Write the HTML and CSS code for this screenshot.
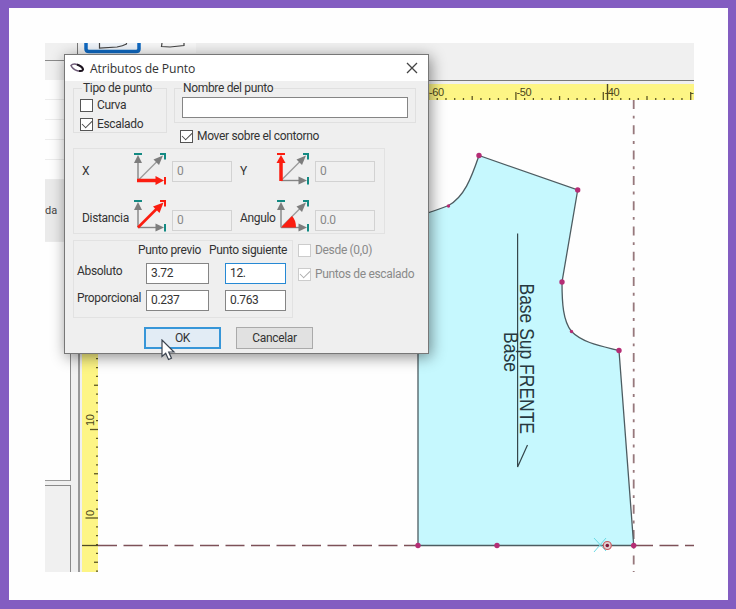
FILE: index.html
```html
<!DOCTYPE html>
<html lang="es">
<head>
<meta charset="utf-8">
<title>Atributos de Punto</title>
<link rel="stylesheet" href="styles.css">
</head>
<body>
<main class="frame">
  <section class="app">
    <div class="topbar">
      <div class="topbar-left"></div>
      <svg class="tools" width="200" height="37" viewBox="0 0 200 37">
        <path d="M62 0H118V10H62Z" fill="#f6f6f6"/>
        <path d="M8-3H61V6Q61 8.500 58 8.500H11Q8 8.500 8 6Z" fill="#eef3f9" stroke="#0f68c0" stroke-width="3.500"/>
        <path d="M21.500 0V5L39 4Q45 3 48.500 1V0M84 0L83.500 3.500L92 4L106 2.500V0" fill="none" stroke="#444" stroke-width="1.200"/>
      </svg>
    </div>
    <div class="workspace">
      <aside class="side">
        <div class="side-top">
          <div class="cell"></div><div class="cell"></div><div class="cell"></div><div class="cell"></div><div class="cell"></div>
          <div class="cell selected">da</div>
        </div>
        <div class="side-bottom"></div>
      </aside>
      <svg class="canvas" width="614" height="492" viewBox="80 80 614 492">
        <path d="M80 80H694V84H82V572H80Z" fill="#f0f0f0"/>
        <path d="M80 80H694" stroke="#777" stroke-width="2"/>
        <path d="M82 84H694V100H98V572H82Z" fill="#fdf585"/>
        <g id="ticks" stroke="#5c5624" stroke-width="1.300"></g>
        <g class="scale">
          <text x="429" y="95.500">-60</text><text x="516.500" y="95.500">-50</text><text x="604.500" y="95.500">-40</text><text x="690.300" y="95.500">-</text>
          <text transform="translate(94 426) rotate(-90)">10</text><text transform="translate(94 516) rotate(-90)">0</text>
        </g>
        <path d="M607.500 84V100" stroke="#4f4a25" stroke-width="1.400"/>
        <path d="M633.700 100V572" stroke="#97787c" stroke-width="1.800" stroke-dasharray="9 6.700 2.900 6.700"/>
        <path d="M98 545.500H418M634 545.500H694" stroke="#7d5158" stroke-width="1.300" stroke-dasharray="19 6.500"/>
        <path d="M82 545.500H98" stroke="#4f4a25" stroke-width="1.300"/>
        <path d="M418 545.500V216C431 212 440 209 448.500 205.500C464 197 471 179 479 155.500L577.700 190L562 282C562 303 563 321 571.500 331.500C583 343 601 346 619 350.500L633.700 545.500Z" fill="#c6f8fe" stroke="#4d5c61" stroke-width="1.300"/>
        <path d="M517.600 233.500V467L527.500 445" fill="none" stroke="#35474c" stroke-width="1.200"/>
        <g class="piece">
          <text transform="translate(519.500 283.500) rotate(90)" textLength="150.500" lengthAdjust="spacingAndGlyphs">Base Sup FRENTE</text>
          <text transform="translate(503.500 332) rotate(90)" textLength="40" lengthAdjust="spacingAndGlyphs">Base</text>
        </g>
        <path d="M594 538L606 551M594 552L606 538" stroke="#6bdbe5"/>
        <g fill="#b52d75">
          <circle cx="479" cy="155.500" r="2.700"/><circle cx="577.700" cy="190" r="2.700"/><circle cx="562" cy="282" r="2.700"/><circle cx="619" cy="350.500" r="2.700"/>
          <circle cx="418" cy="545.500" r="2.700"/><circle cx="497" cy="545.500" r="2.700"/><circle cx="633.700" cy="545.500" r="2.700"/>
          <circle cx="448.500" cy="206" r="1.700"/><circle cx="571.500" cy="331.500" r="1.700"/>
        </g>
        <circle cx="607.300" cy="545.500" r="4" fill="#e3cfd1" stroke="#c85a62" stroke-width="1.200"/><circle cx="607.300" cy="545.500" r="1.800" fill="#7d1838"/>
      </svg>
    </div>

    <section class="dialog">
      <header class="titlebar">
        <svg width="16" height="12" viewBox="0 0 16 12"><path d="M2 3.500C5 0 14 4 14 7.500C13 11 4 8.500 2 3.500Z" fill="#fff" stroke="#6f5c78" stroke-width="1.500"/><path d="M8 2.500Q13.500 4.500 14 7.500Q13.500 9.500 10 9" fill="none" stroke="#1d141f" stroke-width="2"/></svg>
        <h1>Atributos de Punto</h1>
        <svg class="close" width="12" height="12" viewBox="0 0 12 12"><path d="M1 1L11 11M11 1L1 11" stroke="#444" stroke-width="1.300"/></svg>
      </header>
      <div class="body">
        <div class="top-row">
          <fieldset class="kind">
            <legend>Tipo de punto</legend>
            <label class="check"><i class="box"></i><span>Curva</span></label>
            <label class="check"><i class="box on"></i><span>Escalado</span></label>
          </fieldset>
          <div class="name-col">
            <fieldset class="name"><legend>Nombre del punto</legend><div class="input"></div></fieldset>
            <label class="check"><i class="box on"></i><span>Mover sobre el contorno</span></label>
          </div>
        </div>
        <div class="group vectors">
          <span>X</span><svg class="axis" viewBox="0 0 34 34"><use href="#up"/><use href="#diag"/><use href="#rightred"/></svg><div class="input off">0</div>
          <span>Y</span><svg class="axis" viewBox="0 0 34 34"><use href="#right"/><use href="#diag"/><use href="#upred"/></svg><div class="input off">0</div>
          <span>Distancia</span><svg class="axis" viewBox="0 0 34 34"><use href="#up"/><use href="#right"/><use href="#diagred"/></svg><div class="input off low">0</div>
          <span>Angulo</span><svg class="axis" viewBox="0 0 34 34"><use href="#up"/><use href="#right"/><use href="#diag"/><path d="M5 28.500L16 17Q20 21 20 28.500Z" fill="#fb1d10"/></svg><div class="input off low">0.0</div>
        </div>
        <div class="bottom-row">
          <div class="group distances">
            <span></span><span class="head">Punto previo</span><span class="head">Punto siguiente</span>
            <span class="side-label">Absoluto</span><div class="input">3.72</div><div class="input focus">12.</div>
            <span class="side-label">Proporcional</span><div class="input">0.237</div><div class="input">0.763</div>
          </div>
          <div class="options">
            <label class="check disabled"><i class="box"></i><span>Desde (0,0)</span></label>
            <label class="check disabled"><i class="box on"></i><span>Puntos de escalado</span></label>
          </div>
        </div>
        <div class="buttons"><button class="ok">OK</button><button>Cancelar</button></div>
      </div>
    </section>
    <svg class="cursor" width="15" height="22" viewBox="0 0 15 22"><path d="M1 1V17.500L4.700 14.300L7.500 20.500L10.500 19.200L7.700 13H13Z" fill="#fff" stroke="#3c4450" stroke-width="1.200"/></svg>
  </section>
</main>
<svg class="defs" width="0" height="0">
  <defs>
    <g id="up"><path d="M5 28.500V9" stroke="#858585" stroke-width="1.400"/><path d="M1 11L5 3L9 11Z" fill="#7d7d7d"/><path d="M1 2H9" stroke="#138a83" stroke-width="2"/></g>
    <g id="right"><path d="M5 28.500H24" stroke="#858585" stroke-width="1.400"/><path d="M22.500 24.500L31 28.500L22.500 32.500Z" fill="#7d7d7d"/><path d="M32 25V32.500" stroke="#138a83" stroke-width="2"/></g>
    <g id="diag"><path d="M5 28.500L24 9.500" stroke="#999" stroke-width="1.200"/><path d="M20.500 7.500L30 3.500L26 13Z" fill="#7d7d7d"/><path d="M27 2H32V7.500" fill="none" stroke="#138a83" stroke-width="2"/></g>
    <g id="rightred"><path d="M4 28.500H24" stroke="#fb1d10" stroke-width="3.500"/><path d="M22.500 24L31 28.500L22.500 33Z" fill="#fb1d10"/><path d="M32 25V32.500" stroke="#fb1d10" stroke-width="2"/></g>
    <g id="upred"><path d="M5 29V9" stroke="#fb1d10" stroke-width="3.500"/><path d="M.5 11L5 3L9.500 11Z" fill="#fb1d10"/><path d="M1 2H9" stroke="#fb1d10" stroke-width="2"/></g>
    <g id="diagred"><path d="M5 28.500L24 9.500" stroke="#fb1d10" stroke-width="2.600"/><path d="M20 7.500L30.500 3.500L26.500 14Z" fill="#fb1d10"/><path d="M27 2H32V7.500" fill="none" stroke="#fb1d10" stroke-width="2"/></g>
  </defs>
</svg>
<script src="ruler.js"></script>
</body>
</html>
```
FILE: styles.css
```css
* { box-sizing: border-box; }
body { margin: 0; font-family: Roboto, "Liberation Sans", sans-serif; font-size: 12px; letter-spacing: -.33px; color: #333; }
.frame { width: 736px; height: 609px; border: solid #835dc1; border-width: 8px 8.5px 9px 9px; padding: 35px 0 0 36px; background: #fefefe; }
.app { position: relative; width: 649px; height: 529px; overflow: hidden; background: #fefefe; display: flex; flex-direction: column; }
.topbar { height: 37px; background: #f0f0f0; display: flex; flex: none; }
.topbar-left { width: 33px; height: 18px; border-right: 1px solid #777; border-bottom: 1px solid #8a8a8a; flex: none; }
.workspace { display: flex; height: 492px; }
.side { width: 35px; background: #f0f0f0; display: flex; flex-direction: column; flex: none; border-right: 2px solid #999; gap: 4px; }
.side-top { width: 26px; height: 401px; background: #fefefe; border-right: 1px solid #8a8a8a; border-bottom: 1px solid #999; }
.cell { height: 20px; border-bottom: 1px solid #ececec; }
.cell.selected { height: 62px; background: #eaeaea; line-height: 62px; font-size: 11px; color: #444; letter-spacing: 0; }
.side-bottom { width: 26px; flex: 1; border: solid #8a8a8a; border-width: 1px 1px 0 0; }
.canvas { display: block; flex: none; }
.scale { font: 11px "Liberation Sans", sans-serif; fill: #4b461c; }
.piece { font: 19.500px "Liberation Sans", sans-serif; fill: #273840; letter-spacing: 0; }
.defs { position: absolute; }

.dialog { position: absolute; left: 19px; top: 11px; width: 365px; height: 300px; border: 1px solid #777; background: #efefef; box-shadow: 2px 3px 14px rgba(0,0,0,.45); }
.titlebar { height: 26px; background: #fff; display: flex; align-items: center; padding: 0 10px 0 4px; }
.titlebar h1 { margin: 0 0 0 5px; font: 12.200px "Open Sans", sans-serif; letter-spacing: -.1px; color: #333; flex: 1; }
.body { padding: 1px 12px 0 8px; }
.top-row { display: flex; gap: 7px; height: 66px; align-items: flex-start; }
fieldset { margin: 0; border: 1px solid #e0e0e0; min-width: 0; padding: 0; }
legend { padding: 0 1px; height: 12px; line-height: 12px; white-space: nowrap; }
.kind { width: 94px; height: 51px; padding: 2px 0 0 6px; }
.kind legend { margin-left: 2px; }
.name-col { width: 242px; }
.name { height: 41px; padding: 3px 7px 0; }
.name legend { margin-left: 0; }
.check { display: flex; align-items: center; gap: 4px; height: 19px; line-height: 19px; white-space: nowrap; }
.box { width: 13px; height: 13px; border: 1px solid #555; background: #fff; flex: none; }
.box.on::after { content: ""; display: block; width: 9px; height: 5px; margin: 1px 0 0 1px; border: solid #444; border-width: 0 0 1.300px 1.300px; transform: rotate(-45deg) scale(.95); }
.name-col > .check { padding-left: 6px; margin-top: 4px; }
.input { height: 21px; border: 1px solid #858585; background: #fff; padding-left: 4px; line-height: 19px; }
.input.off { background: #f0f0f0; border-color: #d2d2d2; color: #888; }
.input.focus { border: 1.500px solid #2689d4; }
.group { border: 1px solid #e2e2e2; }
.vectors { width: 312px; height: 86px; padding: 3px 0 0 8px; display: grid; grid-template-columns: 51px 34px 73px 36px 34px 66px; grid-template-rows: 34px 34px; row-gap: 13px; align-items: center; }
.vectors .input { margin-top: 4px; width: 60px; margin-left: 5px; }
.vectors .input.low { margin-top: 8px; }
.vectors span { white-space: nowrap; padding-top: 4px; }
.axis { width: 34px; height: 34px; }
.bottom-row { display: flex; margin-top: 6px; gap: 5px; }
.distances { width: 220px; height: 78px; flex: none; padding: 1px 0 0 3px; display: grid; grid-template-columns: 53px 63px 61px; column-gap: 16px; grid-template-rows: 15px 21px 21px; row-gap: 6px; align-items: center; white-space: nowrap; }
.head { margin-left: -8px; }
.head + .head { margin-left: -16px; }
.side-label { padding-bottom: 6px; }
.options { display: flex; flex-direction: column; gap: 5px; padding-top: 1px; }
.disabled { color: #8a8a8a; }
.disabled .box { border-color: #ccc; }
.disabled .box.on::after { border-color: #aaa; }
.buttons { display: flex; gap: 15px; margin: 9px 0 0 71px; }
button { width: 77px; height: 22px; border: 1px solid #aaa; background: #e1e1e1; color: #333; font: inherit; letter-spacing: inherit; padding: 0; }
.ok { border: 2px solid #3796d8; background: #e2ecf5; }
.cursor { position: absolute; left: 116px; top: 296px; }
```
FILE: ruler.js
```js
const ticks = document.getElementById("ticks");
const addTick = (d) => {
  const p = document.createElementNS("http://www.w3.org/2000/svg", "path");
  p.setAttribute("d", d);
  ticks.append(p);
};
for (let i = 0; i <= 30; i++) {
  const x = 428.5 + i * 8.74;
  addTick(`M${x} ${i % 10 === 0 ? 92 : i % 5 === 0 ? 96 : 98}V100`);
}
for (let i = -6; i <= 18; i++) {
  const y = 518 - i * 8.85;
  addTick(`M98 ${y}H${i === 0 ? 85.5 : i % 10 === 0 ? 90 : i % 5 === 0 ? 94 : 96}`);
}
```
